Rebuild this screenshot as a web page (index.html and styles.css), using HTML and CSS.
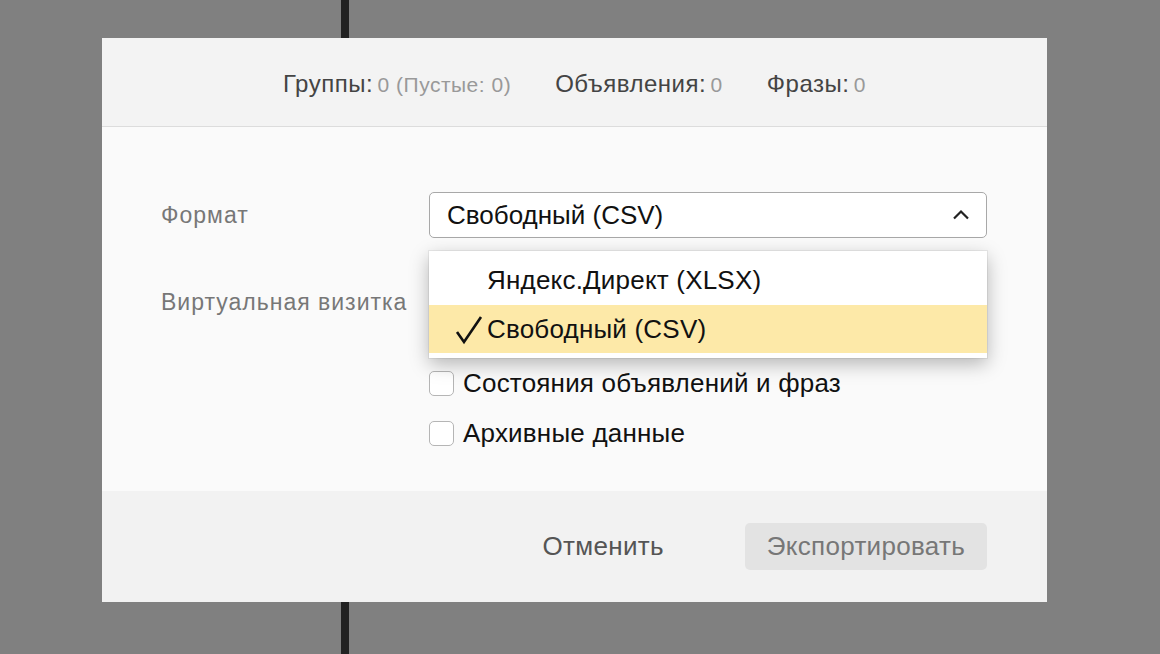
FILE: index.html
```html
<!DOCTYPE html>
<html lang="ru">
<head>
<meta charset="utf-8">
<title>Экспорт</title>
<link rel="stylesheet" href="styles.css">
</head>
<body>
<div class="page-bar"></div>
<div class="modal">
  <div class="modal-head">
    <span class="stat"><span class="stat-name">Группы:</span> <span class="stat-val">0 (Пустые: 0)</span></span>
    <span class="stat"><span class="stat-name">Объявления:</span> <span class="stat-val">0</span></span>
    <span class="stat"><span class="stat-name">Фразы:</span> <span class="stat-val">0</span></span>
  </div>
  <div class="modal-body">
    <div class="row row-format">
      <div class="label">Формат</div>
      <div class="control">
        <div class="select">
          <span>Свободный (CSV)</span>
          <svg class="chevron" width="18" height="12" viewBox="0 0 18 12"><path d="M2 9.5 L9 2.5 L16 9.5" fill="none" stroke="#222" stroke-width="2.2"/></svg>
        </div>
        <div class="menu">
          <div class="menu-item">Яндекс.Директ (XLSX)</div>
          <div class="menu-item selected">
            <svg class="check" width="32" height="32" viewBox="0 0 32 32"><path d="M3 18 L10 28 L27 3" fill="none" stroke="#111" stroke-width="2.6" stroke-linejoin="miter"/></svg>
            Свободный (CSV)
          </div>
        </div>
      </div>
    </div>
    <div class="row row-vcard">
      <div class="label">Виртуальная визитка</div>
      <div class="control"><div class="select select-ghost"></div></div>
    </div>
    <div class="row row-checks">
      <div class="label"></div>
      <div class="control checks">
        <label class="check-item"><span class="box"></span>Состояния объявлений и фраз</label>
        <label class="check-item"><span class="box"></span>Архивные данные</label>
      </div>
    </div>
  </div>
  <div class="modal-foot">
    <button class="btn btn-cancel">Отменить</button>
    <button class="btn btn-export">Экспортировать</button>
  </div>
</div>
</body>
</html>
```
FILE: styles.css
```css
html, body {
  margin: 0;
  padding: 0;
}
body {
  width: 1160px;
  height: 654px;
  background: #808080;
  font-family: "Liberation Sans", Arial, sans-serif;
  position: relative;
  overflow: hidden;
  padding: 38px 0 0 102px;
  box-sizing: border-box;
}
.page-bar {
  position: absolute;
  left: 341px;
  top: 0;
  width: 8px;
  height: 654px;
  background: #222;
}
.modal {
  position: relative;
  width: 945px;
  background: #fafafa;
  display: flex;
  flex-direction: column;
}
.modal-head {
  height: 89px;
  box-sizing: border-box;
  padding-top: 3px;
  background: #f3f3f3;
  border-bottom: 1px solid #dcdcdc;
  display: flex;
  align-items: center;
  justify-content: center;
  gap: 44px;
}
.stat-name {
  font-size: 24px;
  letter-spacing: 0.5px;
  color: #444;
}
.stat-val {
  font-size: 21px;
  letter-spacing: 0.5px;
  color: #999;
}
.modal-body {
  padding: 65px 60px 45px 59px;
  display: flex;
  flex-direction: column;
}
.row {
  display: grid;
  grid-template-columns: 268px 1fr;
  align-items: center;
}
.row-vcard {
  margin-top: 41px;
}
.row-checks {
  margin-top: 45px;
}
.label {
  font-size: 23px;
  letter-spacing: 1px;
  color: #777;
}
.control {
  position: relative;
}
.select {
  height: 46px;
  box-sizing: border-box;
  border: 1px solid #a8a8a8;
  border-radius: 5px;
  background: #fff;
  display: flex;
  align-items: center;
  justify-content: space-between;
  padding: 0 16px 0 17px;
  font-size: 26px;
  color: #111;
}
.menu {
  position: absolute;
  left: 0;
  right: 0;
  top: 59px;
  background: #fff;
  padding: 5px 0;
  box-shadow: 0 6px 18px rgba(0, 0, 0, 0.28), 0 0 0 1px rgba(0, 0, 0, 0.06);
  z-index: 2;
}
.menu-item {
  position: relative;
  height: 49px;
  display: flex;
  align-items: center;
  padding-left: 58px;
  font-size: 26px;
  letter-spacing: 0.2px;
  color: #111;
}
.menu-item.selected {
  background: #fde9a8;
  height: 48px;
}
.check {
  position: absolute;
  left: 25px;
  top: 9px;
}
.checks {
  display: flex;
  flex-direction: column;
  gap: 24px;
}
.check-item {
  display: flex;
  align-items: center;
  gap: 9px;
  font-size: 26px;
  letter-spacing: 0.2px;
  line-height: 26px;
  color: #111;
  height: 26px;
}
.box {
  width: 25px;
  height: 25px;
  flex: none;
  box-sizing: border-box;
  border: 1px solid #b5b5b5;
  border-radius: 5px;
  background: #fff;
}
.modal-foot {
  background: #f2f2f2;
  height: 111px;
  box-sizing: border-box;
  padding: 32px 60px 32px 0;
  display: flex;
  justify-content: flex-end;
  align-items: center;
  gap: 59px;
}
.btn {
  font-family: "Liberation Sans", Arial, sans-serif;
  font-size: 26px;
  letter-spacing: 0.3px;
  border: none;
  border-radius: 5px;
  height: 47px;
  padding: 0 22px;
  background: transparent;
}
.btn-cancel {
  color: #555;
}
.btn-export {
  background: #e3e3e3;
  color: #777;
}
```
